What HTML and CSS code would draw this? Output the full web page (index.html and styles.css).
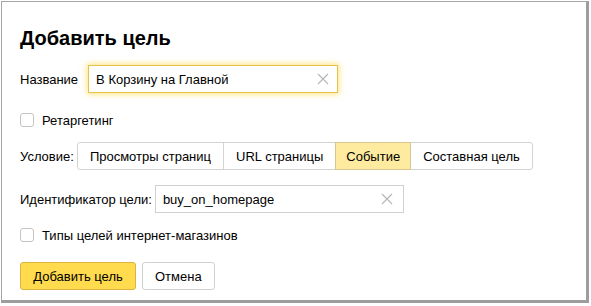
FILE: index.html
```html
<!DOCTYPE html>
<html lang="ru">
<head>
<meta charset="utf-8">
<title>Добавить цель</title>
<link rel="stylesheet" href="styles.css">
</head>
<body>
<div class="dialog">
  <h1 class="title">Добавить цель</h1>

  <div class="row row-name">
    <span class="label label-name">Название</span>
    <div class="input input-focused input-name">
      <span class="input-text">В Корзину на Главной</span>
      <span class="clear"><svg width="12" height="12" viewBox="0 0 12 12"><path d="M1 1L11 11M11 1L1 11" stroke="#b5b5b5" stroke-width="1.1" fill="none"/></svg></span>
    </div>
  </div>

  <label class="row row-check1 check">
    <span class="box"></span>
    <span class="check-text">Ретаргетинг</span>
  </label>

  <div class="row row-cond">
    <span class="label">Условие:</span>
    <div class="tabs">
      <span class="tab">Просмотры страниц</span>
      <span class="tab">URL страницы</span>
      <span class="tab tab-active">Событие</span>
      <span class="tab">Составная цель</span>
    </div>
  </div>

  <div class="row row-ident">
    <span class="label label-ident">Идентификатор цели:</span>
    <div class="input input-ident">
      <span class="input-text">buy_on_homepage</span>
      <span class="clear"><svg width="12" height="12" viewBox="0 0 12 12"><path d="M1 1L11 11M11 1L1 11" stroke="#b5b5b5" stroke-width="1.1" fill="none"/></svg></span>
    </div>
  </div>

  <label class="row row-check2 check">
    <span class="box"></span>
    <span class="check-text">Типы целей интернет-магазинов</span>
  </label>

  <div class="row row-buttons">
    <button class="btn btn-primary">Добавить цель</button>
    <button class="btn">Отмена</button>
  </div>
</div>
</body>
</html>
```

FILE: styles.css
```css
html, body {
  margin: 0;
  padding: 0;
  background: #ffffff;
}
body {
  font-family: "Liberation Sans", Arial, sans-serif;
  font-size: 13px;
  color: #000;
  width: 591px;
  height: 306px;
  overflow: hidden;
}
.dialog {
  box-sizing: border-box;
  margin: 1px 0 0 1px;
  width: 588px;
  height: 302px;
  border: 1px solid #a6a6a6;
  border-right: 3px solid #9d9d9d;
  border-bottom: 3px solid #9d9d9d;
  background: #fff;
  padding: 23px 0 0 18px;
}
.title {
  margin: 0;
  font-size: 20px;
  line-height: 27px;
  font-weight: bold;
  color: #000;
}
.row {
  display: flex;
  align-items: center;
  height: 28px;
}
.row-name { margin-top: 13px; }
.row-check1 { margin-top: 13px; }
.row-cond { margin-top: 8px; }
.row-ident { margin-top: 15px; }
.row-check2 { margin-top: 8px; }
.row-buttons { margin-top: 13px; gap: 6px; }

.label {
  color: #000;
  margin-right: 7px;
}
.label-name { margin-right: 10px; }
.label-ident { margin-right: 3px; }
.input {
  box-sizing: border-box;
  height: 28px;
  display: flex;
  align-items: center;
  justify-content: space-between;
  border: 1px solid #d0d0d0;
  padding: 0 10px 0 7px;
  background: #fff;
}
.input-name { width: 250px; padding-right: 8px; }
.input-ident { width: 249px; }
.input-focused {
  border-color: #e4c24f;
  box-shadow: 0 0 6px 1px rgba(255, 204, 0, 0.55);
}
.clear {
  display: flex;
  align-items: center;
}
.check {
  gap: 8px;
}
.box {
  box-sizing: border-box;
  width: 14px;
  height: 14px;
  border: 1px solid #c4c4c4;
  border-radius: 3px;
  background: #fff;
}
.tabs {
  display: flex;
  height: 28px;
  margin-left: -4px;
}
.tab {
  box-sizing: border-box;
  height: 28px;
  display: flex;
  align-items: center;
  padding: 0 12px;
  border: 1px solid #d3d3d3;
  margin-left: -1px;
  background: #fff;
}
.tab:first-child {
  margin-left: 0;
  border-radius: 3px 0 0 3px;
}
.tab:last-child {
  border-radius: 0 3px 3px 0;
}
.tab-active {
  background: #ffeba0;
  border-color: #d6c68f;
  padding: 0 10px;
  position: relative;
}
.btn {
  box-sizing: border-box;
  height: 28px;
  font-family: "Liberation Sans", Arial, sans-serif;
  font-size: 13px;
  color: #000;
  background: #fff;
  border: 1px solid #d0d0d0;
  border-radius: 3px;
  padding: 0 12px;
}
.btn-primary {
  background: #ffdb4d;
  border-color: #d9b540;
  width: 116px;
}
```
